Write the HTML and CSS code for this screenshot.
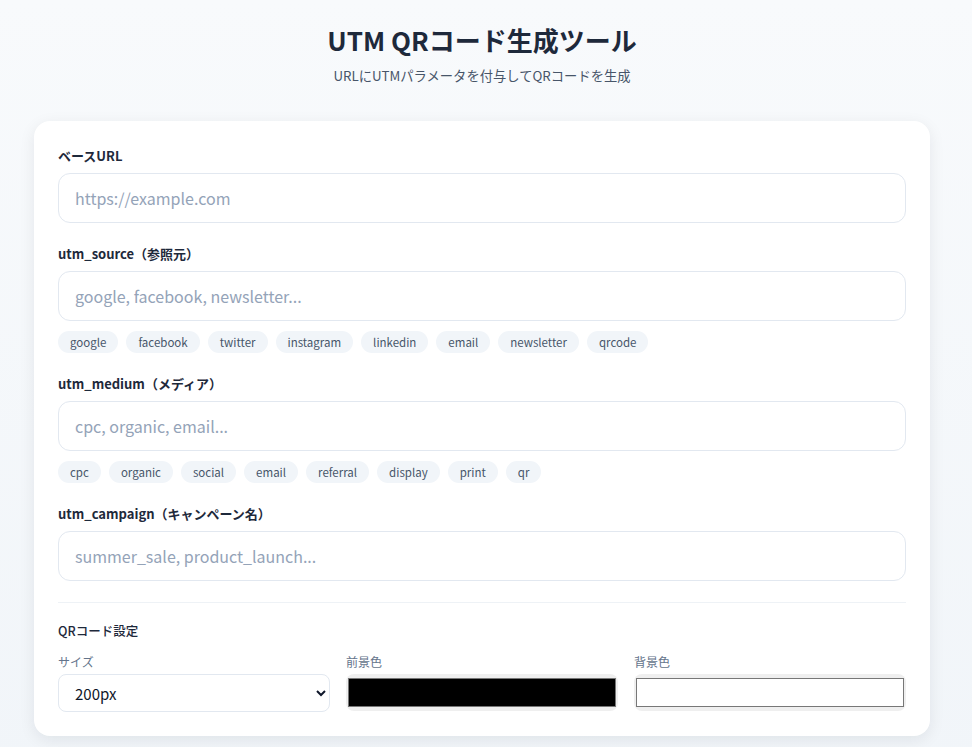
FILE: index.html
```html
<!DOCTYPE html>
<html lang="ja">
<head>
<meta charset="utf-8">
<title>UTM QRコード生成ツール</title>
<link rel="stylesheet" href="styles.css">
</head>
<body>
<div class="page">
  <header class="header">
    <h1 class="title">UTM QRコード生成ツール</h1>
    <p class="subtitle">URLにUTMパラメータを付与してQRコードを生成</p>
  </header>
  <main class="card">
    <div class="field">
      <label class="label">ベースURL</label>
      <input class="text-input" type="text" placeholder="https://example.com">
    </div>
    <div class="field">
      <label class="label">utm_source（参照元）</label>
      <input class="text-input" type="text" placeholder="google, facebook, newsletter...">
      <div class="chips">
        <span class="chip">google</span><span class="chip">facebook</span><span class="chip">twitter</span><span class="chip">instagram</span><span class="chip">linkedin</span><span class="chip">email</span><span class="chip">newsletter</span><span class="chip">qrcode</span>
      </div>
    </div>
    <div class="field">
      <label class="label">utm_medium（メディア）</label>
      <input class="text-input" type="text" placeholder="cpc, organic, email...">
      <div class="chips">
        <span class="chip">cpc</span><span class="chip">organic</span><span class="chip">social</span><span class="chip">email</span><span class="chip">referral</span><span class="chip">display</span><span class="chip">print</span><span class="chip">qr</span>
      </div>
    </div>
    <div class="field">
      <label class="label">utm_campaign（キャンペーン名）</label>
      <input class="text-input" type="text" placeholder="summer_sale, product_launch...">
    </div>
    <section class="settings">
      <h2 class="settings-title">QRコード設定</h2>
      <div class="settings-grid">
        <div class="setting">
          <label class="small-label">サイズ</label>
          <select class="select">
            <option>200px</option>
            <option>300px</option>
            <option>400px</option>
          </select>
        </div>
        <div class="setting">
          <label class="small-label">前景色</label>
          <input class="color-input" type="color" value="#000000">
        </div>
        <div class="setting">
          <label class="small-label">背景色</label>
          <input class="color-input" type="color" value="#ffffff">
        </div>
      </div>
    </section>
  </main>
</div>
</body>
</html>
```

FILE: styles.css
```css
html, body {
  margin: 0;
  padding: 0;
}
body {
  font-family: "Noto Sans CJK JP", "Noto Sans", sans-serif;
  background: linear-gradient(180deg, #f8fafc 0%, #f1f5f9 100%);
  color: #1e293b;
  min-height: 100vh;
}
.page {
  padding: 20px 42px 40px 34px;
}
.header {
  text-align: center;
  margin-bottom: 35px;
}
.title {
  margin: 0;
  font-size: 26px;
  line-height: 40px;
  font-weight: 700;
  color: #1e293b;
}
.subtitle {
  margin: 6px 0 0;
  font-size: 13.3px;
  line-height: 20px;
  color: #475569;
}
.card {
  background: #ffffff;
  border-radius: 16px;
  box-shadow: 0 4px 16px rgba(15, 23, 42, 0.08);
  padding: 26px 24px 24px;
}
.field {
  margin-bottom: 22px;
}
.label {
  display: block;
  font-size: 13px;
  line-height: 18px;
  font-weight: 600;
  color: #1e293b;
  margin-bottom: 8px;
}
.text-input {
  display: block;
  box-sizing: border-box;
  width: 100%;
  height: 50px;
  border: 1px solid #e2e8f0;
  border-radius: 12px;
  padding: 0 16px;
  font-family: inherit;
  font-size: 16px;
  color: #1e293b;
  background: #ffffff;
  outline: none;
}
.text-input::placeholder {
  color: #94a3b8;
}
.chips {
  display: flex;
  flex-wrap: wrap;
  gap: 8px;
  margin-top: 10px;
}
.chip {
  display: inline-block;
  height: 22px;
  line-height: 22px;
  padding: 0 12px;
  border-radius: 999px;
  background: #f1f5f9;
  color: #475569;
  font-size: 11.5px;
}
.settings {
  border-top: 1px solid #eef2f6;
  padding-top: 18px;
  margin-top: -1px;
}
.settings-title {
  margin: 0 0 13px;
  font-size: 12.5px;
  line-height: 20px;
  font-weight: 500;
  color: #1e293b;
}
.settings-grid {
  display: grid;
  grid-template-columns: 1fr 1fr 1fr;
  gap: 16px;
}
.small-label {
  display: block;
  font-size: 12px;
  line-height: 16px;
  color: #64748b;
  margin-bottom: 4px;
}
.select {
  display: block;
  box-sizing: border-box;
  width: 100%;
  height: 38px;
  border: 1px solid #e2e8f0;
  border-radius: 8px;
  padding: 0 12px;
  font-family: inherit;
  font-size: 15px;
  color: #0f172a;
  background: #ffffff;
}
.color-input {
  display: block;
  box-sizing: border-box;
  width: 100%;
  height: 37px;
  border: none;
  padding: 0;
  border-radius: 8px;
  cursor: pointer;
}
```
